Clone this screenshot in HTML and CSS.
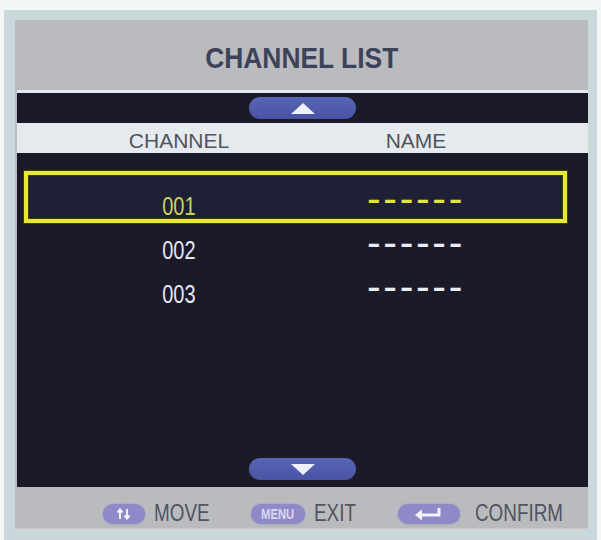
FILE: index.html
```html
<!DOCTYPE html>
<html lang="en">
<head>
    <meta charset="UTF-8">
    <title>Channel List</title>
    <link rel="stylesheet" href="styles.css">
</head>
<body>
    <div class="frame">
        <div class="panel">
            <div class="title"><h1>CHANNEL LIST</h1></div>

            <div class="list">
                <div class="scroll-top">
                    <span class="pill">
                        <svg width="24" height="11" viewBox="0 0 24 11"><polygon points="12,0 24,11 0,11" fill="#eef0fb"/></svg>
                    </span>
                </div>

                <div class="cols head">
                    <span>CHANNEL</span>
                    <span>NAME</span>
                </div>

                <div class="body">
                    <div class="cols row sel"><span class="num">001</span><span class="name">------</span></div>
                    <div class="cols row"><span class="num">002</span><span class="name">------</span></div>
                    <div class="cols row"><span class="num">003</span><span class="name">------</span></div>

                    <span class="pill down">
                        <svg width="24" height="11" viewBox="0 0 24 11"><polygon points="0,0 24,0 12,11" fill="#eef0fb"/></svg>
                    </span>
                </div>
            </div>

            <div class="legend">
                <div class="key">
                    <span class="kbtn move">
                        <svg width="16" height="12" viewBox="0 0 16 12">
                            <path d="M4 11V2M1.5 4.5L4 1.5L6.5 4.5" stroke="#f4f2ff" stroke-width="2" fill="none"/>
                            <path d="M11 1v9M8.5 7.5L11 10.5L13.5 7.5" stroke="#f4f2ff" stroke-width="2" fill="none"/>
                        </svg>
                    </span>
                    <span class="label w-move">MOVE</span>
                </div>
                <div class="key">
                    <span class="kbtn menu"><span>MENU</span></span>
                    <span class="label w-exit">EXIT</span>
                </div>
                <div class="key">
                    <span class="kbtn enter">
                        <svg width="28" height="13" viewBox="0 0 28 13">
                            <path d="M24 1v7H4" stroke="#f4f2ff" stroke-width="3" fill="none"/>
                            <polygon points="0,8 7,2.5 7,13.5" fill="#f4f2ff"/>
                        </svg>
                    </span>
                    <span class="label w-confirm">CONFIRM</span>
                </div>
            </div>
        </div>
    </div>
</body>
</html>
```

FILE: styles.css
```css
body {
    margin: 0;
    height: 540px;
    overflow: hidden;
    background-color: #f3f6f7;
    font-family: "Liberation Sans", Arial, sans-serif;
}

.frame {
    margin: 10px 0 0 4px;
    width: 593px;
    height: 530px;
    box-sizing: border-box;
    padding: 10px 9px 0 11px;
    background-color: #c8d8db;
}

.panel {
    height: 509px;
    box-sizing: border-box;
    display: flex;
    flex-direction: column;
    background-color: #babbbf;
    border-bottom: 1px solid #d8bfc8;
}

.title {
    height: 70px;
    box-sizing: border-box;
    padding-top: 6px;
    display: flex;
    align-items: center;
    justify-content: center;
}

.title h1 {
    margin: 0;
    font-size: 30px;
    font-weight: bold;
    color: #3d4258;
    transform: scaleX(0.88);
}

.list {
    margin-left: 2px;
    display: flex;
    flex-direction: column;
    background-color: #1b1a29;
    border-top: 3px solid #e3e9eb;
}

.scroll-top {
    height: 30px;
    display: flex;
    align-items: center;
    justify-content: center;
}

.pill {
    width: 107px;
    height: 22px;
    border-radius: 11px;
    display: flex;
    align-items: center;
    justify-content: center;
    background: linear-gradient(#5864b6, #4a53a3);
}

/* two columns: channel number and name */
.cols {
    display: grid;
    grid-template-columns: 180px 120px;
    column-gap: 87px;
    padding-left: 72px;
    justify-items: center;
    align-items: center;
}

.head {
    height: 30px;
    box-sizing: border-box;
    padding-top: 6px;
    background-color: #e5eaee;
    font-size: 21px;
    color: #50535d;
}

.body {
    height: 334px;
    box-sizing: border-box;
    padding: 31px 0 7px;
    display: flex;
    flex-direction: column;
}

.row {
    height: 44px;
    position: relative;
    color: #e6e6f0;
}

.row span {
    position: relative;
}

.sel {
    color: #cdd25c;
}

.sel::before {
    content: "";
    position: absolute;
    left: 7px;
    right: 21px;
    top: -13px;
    bottom: 5px;
    border: 4px solid #e8e834;
    box-shadow: 0 0 0 1px #3d3b12, inset 0 0 0 1px #3d3b12;
    background-color: #1e2036;
}

.num {
    display: inline-block;
    font-size: 25px;
    transform: scaleX(0.8);
}

.name {
    font-size: 41px;
    line-height: 20px;
    letter-spacing: 2.7px;
    margin-bottom: 17px;
    color: #ececf4;
}

.sel .name {
    color: #e4e43a;
}

.down {
    margin-top: auto;
    align-self: center;
}

.legend {
    flex: 1;
    display: flex;
    align-items: center;
    padding: 12px 0 0 88px;
    gap: 42px;
    font-size: 23px;
    color: #51545f;
}

.key {
    display: flex;
    align-items: center;
    gap: 9px;
}

/* labels are drawn narrow, so their boxes get the narrow width */
.label {
    display: inline-block;
    white-space: nowrap;
    transform: scaleX(0.82);
    transform-origin: left center;
}

.w-move {
    width: 55px;
}

.w-exit {
    width: 42px;
}

.w-confirm {
    width: 88px;
}

.kbtn {
    height: 20px;
    border-radius: 10px;
    display: flex;
    align-items: center;
    justify-content: center;
    background-color: #8e8ac8;
    box-shadow: 0 0 2px #8e8ac8;
}

.move {
    width: 42px;
}

.menu {
    width: 54px;
    font-size: 14px;
    font-weight: bold;
    color: #dcd8f2;
}

.menu span {
    transform: scaleX(0.8);
}

.enter {
    width: 62px;
    margin-right: 6px;
}
```
